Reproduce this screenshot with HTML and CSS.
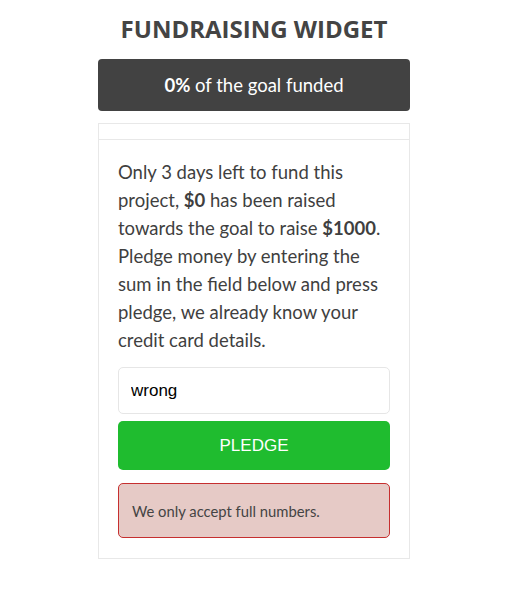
FILE: index.html
```html
<!DOCTYPE html>
<html lang="en">
<head>
<meta charset="utf-8">
<title>Fundraising widget</title>
<link rel="stylesheet" href="styles.css">
</head>
<body>
<div class="page">
  <h1 class="title">FUNDRAISING WIDGET</h1>
  <div class="widget">
    <div class="status"><strong>0%</strong> of the goal funded</div>
    <div class="card">
      <div class="progress"></div>
      <div class="card-body">
        <p class="info">Only 3 days left to fund this project, <strong>$0</strong> has been raised towards the goal to raise <strong>$1000</strong>. Pledge money by entering the sum in the field below and press pledge, we already know your credit card details.</p>
        <input class="amount" type="text" value="wrong">
        <button class="pledge" type="button">PLEDGE</button>
        <div class="error">We only accept full numbers.</div>
      </div>
    </div>
  </div>
</div>
</body>
</html>
```

FILE: styles.css
```css
html, body {
  margin: 0;
  padding: 0;
  background: #fff;
}
.page {
  width: 508px;
  font-family: Lato, "Open Sans", sans-serif;
  color: #444;
}
.title {
  font-family: "Open Sans", sans-serif;
  font-weight: 700;
  font-size: 24px;
  line-height: 34px;
  margin: 12px 0 0;
  text-align: center;
  color: #444;
}
.widget {
  width: 312px;
  margin: 13px auto 0;
}
.status {
  background: #424242;
  color: #fff;
  border-radius: 4px;
  height: 52px;
  display: flex;
  align-items: center;
  justify-content: center;
  font-size: 18.5px;
  white-space: pre;
}
.status strong { font-weight: 700; }
.card {
  margin-top: 12px;
  border: 1px solid #e8e8e8;
}
.progress {
  height: 15px;
  border-bottom: 1px solid #e8e8e8;
}
.card-body {
  padding: 18px 19px 20px;
  display: flex;
  flex-direction: column;
}
.info {
  margin: 0 0 13px;
  font-size: 18.5px;
  line-height: 28px;
  color: #3f3f3f;
}
.info strong { font-weight: 700; }
.amount {
  box-sizing: border-box;
  height: 47px;
  width: 100%;
  border: 1px solid #e6e6e6;
  border-radius: 5px;
  padding: 0 12px;
  font-family: "Liberation Sans", Arial, sans-serif;
  font-size: 17px;
  color: #000;
  outline: none;
}
.pledge {
  margin-top: 7px;
  height: 49px;
  border: none;
  border-radius: 5px;
  background: #1fbc2f;
  color: #fff;
  font-family: "Liberation Sans", Arial, sans-serif;
  font-size: 17px;
}
.error {
  margin-top: 13px;
  box-sizing: border-box;
  height: 55px;
  display: flex;
  align-items: center;
  padding: 0 13px;
  background: #e6cac6;
  border: 1px solid #c62f2f;
  border-radius: 5px;
  font-size: 14.8px;
  color: #444;
}
```
